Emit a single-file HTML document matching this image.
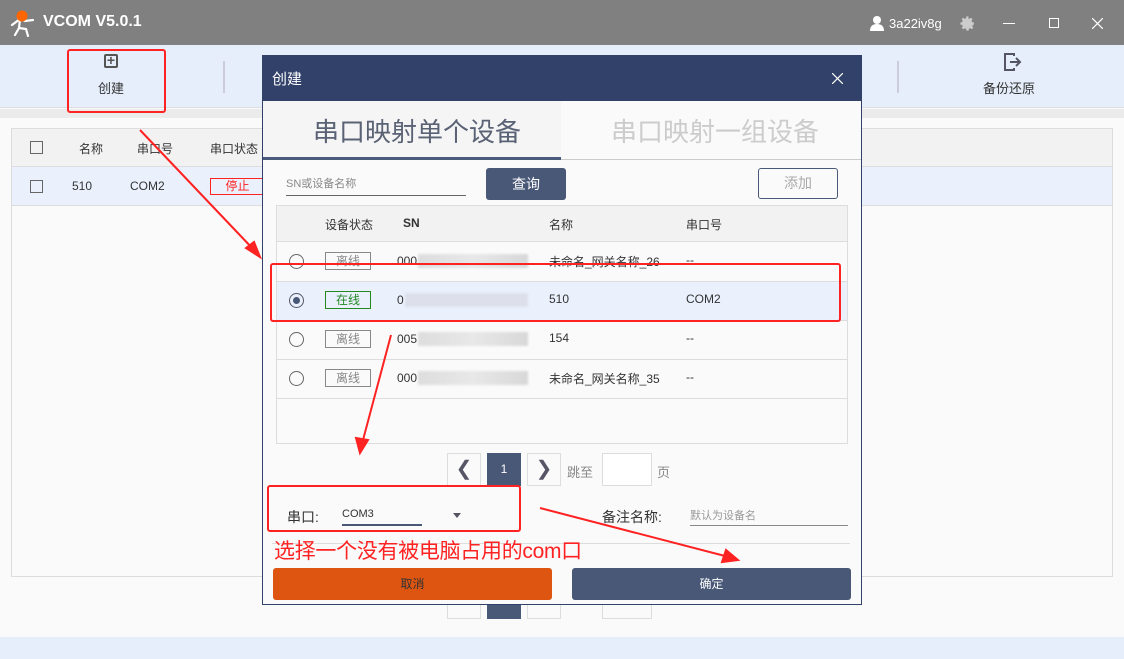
<!DOCTYPE html><html><head><meta charset="utf-8"><style>
*{margin:0;padding:0;box-sizing:border-box}
body{width:1124px;height:659px;position:relative;overflow:hidden;background:#fafafa;font-family:"Liberation Sans","Noto Sans CJK SC",sans-serif;font-size:12px;color:#333}
.a{position:absolute}
.st{border:1px solid #888;color:#888;width:46px;height:18px;line-height:16px;text-align:center;font-size:12px}
.rad{width:15px;height:15px;border:1.5px solid #666;border-radius:50%}
.rb{border:2px solid #f22;border-radius:3px}
.blur{background:linear-gradient(90deg,#ddd,#e8e8e8,#d8d8d8);height:14px;filter:blur(1px)}
</style></head><body>
<div class="a" style="left:0;top:0;width:1124px;height:45px;background:#808080"></div>
<svg class="a" style="left:9px;top:9px" width="28" height="28"><path d="M3 16 L11 10 L16 12 L24 11 M11 10 L10 19 L6 26 M10 19 L17 20 L19 27" stroke="#fff" stroke-width="2.2" fill="none" stroke-linecap="round"/><circle cx="13" cy="7" r="5.5" fill="#f60"/></svg>
<div class="a" style="left:43px;top:13px;color:#fff;font-size:16px;font-weight:bold">VCOM V5.0.1</div>
<svg class="a" style="left:869px;top:15px" width="16" height="16"><circle cx="8" cy="5" r="4" fill="#fff"/><path d="M1 16 Q1 9 8 9 Q15 9 15 16Z" fill="#fff"/></svg>
<div class="a" style="left:889px;top:16px;color:#fff;font-size:13px">3a22iv8g</div>
<svg class="a" style="left:959px;top:15px" width="17" height="17" viewBox="0 0 24 24"><path fill="#ccc" d="M12 8a4 4 0 100 8 4 4 0 000-8zm9 5.5v-3l-2.6-.5a7 7 0 00-.8-1.9l1.5-2.2-2.1-2.1-2.2 1.5a7 7 0 00-1.9-.8L13.5 2h-3l-.5 2.6a7 7 0 00-1.9.8L5.9 3.9 3.8 6l1.5 2.2a7 7 0 00-.8 1.9L2 10.5v3l2.6.5a7 7 0 00.8 1.9l-1.5 2.2 2.1 2.1 2.2-1.5a7 7 0 001.9.8l.4 2.5h3l.5-2.6a7 7 0 001.9-.8l2.2 1.5 2.1-2.1-1.5-2.2a7 7 0 00.8-1.9z"/></svg>
<div class="a" style="left:1003px;top:23px;width:12px;height:1px;background:#fff"></div>
<div class="a" style="left:1049px;top:18px;width:10px;height:10px;border:1px solid #fff"></div>
<svg class="a" style="left:1092px;top:18px" width="11" height="11"><path d="M0 0L11 11M11 0L0 11" stroke="#fff" stroke-width="1.2"/></svg>
<div class="a" style="left:0;top:45px;width:1124px;height:63px;background:#e6eefb;border-bottom:1px solid #ddd"></div>
<div class="a" style="left:0;top:109px;width:1124px;height:9px;background:#ebebeb"></div>
<div class="a" style="left:104px;top:54px;width:14px;height:14px;border:2px solid #555;border-radius:2px;text-align:center;line-height:9px;font-size:14px;font-weight:bold;color:#555">+</div>
<div class="a" style="left:98px;top:78px;font-size:13px">创建</div>
<div class="a" style="left:223px;top:61px;width:2px;height:32px;background:#ccd"></div>
<div class="a" style="left:897px;top:61px;width:2px;height:32px;background:#ccd"></div>
<svg class="a" style="left:1002px;top:52px" width="20" height="20"><path d="M12 4V2H3v16h9v-2M8 10h10M14 6l4 4-4 4" stroke="#556" stroke-width="2" fill="none"/></svg>
<div class="a" style="left:983px;top:78px;font-size:13px">备份还原</div>
<div class="a" style="left:11px;top:128px;width:1102px;height:449px;border:1px solid #ddd;background:#fafafa"></div>
<div class="a" style="left:12px;top:129px;width:1100px;height:38px;background:#f2f2f2;border-bottom:1px solid #ddd"></div>
<div class="a" style="left:12px;top:167px;width:1100px;height:39px;background:#eaf1fd;border-bottom:1px solid #ddd"></div>
<div class="a" style="left:30px;top:141px;width:13px;height:13px;border:1.5px solid #666"></div>
<div class="a" style="left:30px;top:180px;width:13px;height:13px;border:1.5px solid #666"></div>
<div class="a" style="left:79px;top:140px">名称</div><div class="a" style="left:137px;top:140px">串口号</div><div class="a" style="left:210px;top:140px">串口状态</div>
<div class="a" style="left:72px;top:179px">510</div><div class="a" style="left:130px;top:179px">COM2</div>
<div class="a" style="left:210px;top:178px;width:55px;height:17px;border:1px solid #f22;color:#f22;text-align:center;line-height:15px">停止</div>
<div class="a" style="left:447px;top:587px;width:34px;height:32px;border:1px solid #ddd"></div>
<div class="a" style="left:487px;top:587px;width:34px;height:32px;background:#4a5878"></div>
<div class="a" style="left:527px;top:587px;width:34px;height:32px;border:1px solid #ddd"></div>
<div class="a" style="left:602px;top:587px;width:50px;height:32px;border:1px solid #ddd"></div>
<div class="a" style="left:0;top:637px;width:1124px;height:22px;background:#e6eefb"></div>
<!-- dialog -->
<div class="a" style="left:262px;top:55px;width:600px;height:550px;background:#fafafa;border:1px solid #32416a"></div>
<div class="a" style="left:262px;top:55px;width:600px;height:46px;background:#32416a"></div>
<div class="a" style="left:272px;top:68px;color:#fff;font-size:15px">创建</div>
<svg class="a" style="left:832px;top:73px" width="11" height="11"><path d="M0 0L11 11M11 0L0 11" stroke="#fff" stroke-width="1.2"/></svg>
<div class="a" style="left:263px;top:101px;width:298px;height:59px;background:#f5f5f5;border-bottom:3px solid #4a5a7a"></div>
<div class="a" style="left:561px;top:159px;width:300px;height:1px;background:#ccc"></div>
<div class="a" style="left:313px;top:112px;font-size:26px;color:#5a6275">串口映射单个设备</div>
<div class="a" style="left:611px;top:112px;font-size:26px;color:#ccc">串口映射一组设备</div>
<div class="a" style="left:286px;top:175px;width:180px;height:21px;border-bottom:1px solid #666;color:#888;font-size:11px">SN或设备名称</div>
<div class="a" style="left:486px;top:168px;width:80px;height:32px;background:#4a5878;border-radius:3px;color:#fff;text-align:center;line-height:32px;font-size:14px">查询</div>
<div class="a" style="left:758px;top:168px;width:80px;height:31px;border:1px solid #4a5878;border-radius:3px;color:#aaa;text-align:center;line-height:29px;font-size:14px">添加</div>
<div class="a" style="left:276px;top:205px;width:572px;height:239px;border:1px solid #ddd;background:#fafafa"></div>
<div class="a" style="left:277px;top:206px;width:570px;height:36px;background:#f2f2f2;border-bottom:1px solid #ddd"></div>
<div class="a" style="left:277px;top:281px;width:570px;height:39px;background:#eaf1fd"></div>
<div class="a" style="left:277px;top:281px;width:570px;height:1px;background:#ddd"></div>
<div class="a" style="left:277px;top:320px;width:570px;height:1px;background:#ddd"></div>
<div class="a" style="left:277px;top:359px;width:570px;height:1px;background:#ddd"></div>
<div class="a" style="left:277px;top:398px;width:570px;height:1px;background:#ddd"></div>
<div class="a" style="left:325px;top:216px">设备状态</div><div class="a" style="left:403px;top:216px;font-weight:bold">SN</div><div class="a" style="left:549px;top:216px">名称</div><div class="a" style="left:686px;top:216px">串口号</div>
<div class="a rad" style="left:289px;top:254px"></div><div class="a st" style="left:325px;top:252px">离线</div>
<div class="a" style="left:397px;top:254px">000</div><div class="a blur" style="left:418px;top:254px;width:110px"></div>
<div class="a" style="left:549px;top:253px">未命名_网关名称_26</div><div class="a" style="left:686px;top:253px">--</div>
<div class="a rad" style="left:289px;top:293px;border-color:#556"></div><div class="a" style="left:293px;top:297px;width:7px;height:7px;border-radius:50%;background:#4a5878"></div>
<div class="a st" style="left:325px;top:291px;border-color:#282;color:#282">在线</div>
<div class="a" style="left:397px;top:293px">0</div><div class="a blur" style="left:405px;top:293px;width:123px;background:#dde0ea"></div>
<div class="a" style="left:549px;top:292px">510</div><div class="a" style="left:686px;top:292px">COM2</div>
<div class="a rad" style="left:289px;top:332px"></div><div class="a st" style="left:325px;top:330px">离线</div>
<div class="a" style="left:397px;top:332px">005</div><div class="a blur" style="left:418px;top:332px;width:110px"></div>
<div class="a" style="left:549px;top:331px">154</div><div class="a" style="left:686px;top:331px">--</div>
<div class="a rad" style="left:289px;top:371px"></div><div class="a st" style="left:325px;top:369px">离线</div>
<div class="a" style="left:397px;top:371px">000</div><div class="a blur" style="left:418px;top:371px;width:110px"></div>
<div class="a" style="left:549px;top:370px">未命名_网关名称_35</div><div class="a" style="left:686px;top:370px">--</div>
<div class="a" style="left:447px;top:453px;width:34px;height:33px;border:1px solid #ddd;text-align:center;line-height:31px;font-size:20px;color:#556">❮</div>
<div class="a" style="left:487px;top:453px;width:34px;height:33px;background:#4a5878;color:#fff;text-align:center;line-height:33px">1</div>
<div class="a" style="left:527px;top:453px;width:34px;height:33px;border:1px solid #ddd;text-align:center;line-height:31px;font-size:20px;color:#556">❯</div>
<div class="a" style="left:567px;top:462px;color:#888;font-size:13px">跳至</div>
<div class="a" style="left:602px;top:453px;width:50px;height:33px;border:1px solid #ddd;background:#fff"></div>
<div class="a" style="left:657px;top:462px;color:#888;font-size:13px">页</div>
<div class="a" style="left:287px;top:507px;font-size:14px">串口:</div>
<div class="a" style="left:342px;top:508px;width:80px;font-size:11px">COM3</div>
<div class="a" style="left:453px;top:513px;border:4px solid transparent;border-top:5px solid #556"></div>
<div class="a" style="left:342px;top:524px;width:80px;height:2px;background:#4a5878"></div>
<div class="a" style="left:602px;top:507px;font-size:14px">备注名称:</div>
<div class="a" style="left:690px;top:507px;width:158px;height:19px;border-bottom:1px solid #888;color:#999;font-size:11px">默认为设备名</div>
<div class="a" style="left:272px;top:543px;width:578px;height:1px;background:#ddd"></div>
<div class="a" style="left:274px;top:535px;color:#f22;font-size:21px;letter-spacing:-0.3px">选择一个没有被电脑占用的com口</div>
<div class="a" style="left:273px;top:568px;width:279px;height:32px;background:#dd5511;border-radius:3px;text-align:center;line-height:32px;color:#333">取消</div>
<div class="a" style="left:572px;top:568px;width:279px;height:32px;background:#4a5878;border-radius:3px;text-align:center;line-height:32px;color:#fff">确定</div>
<!-- annotations -->
<div class="a rb" style="left:67px;top:49px;width:99px;height:64px"></div>
<div class="a rb" style="left:270px;top:263px;width:571px;height:59px"></div>
<div class="a rb" style="left:267px;top:485px;width:254px;height:47px"></div>
<svg class="a" style="left:0;top:0" width="1124" height="659">
<g stroke="#f22" stroke-width="2" fill="#f22">
<line x1="140" y1="130" x2="254" y2="250"/><polygon points="260,257 246,248 254,242"/>
<line x1="391" y1="335" x2="363" y2="440"/><polygon points="360,453 356,438 368,440"/>
<line x1="540" y1="508" x2="725" y2="556"/><polygon points="738,560 722,562 726,550"/>
</g></svg>
</body></html>
